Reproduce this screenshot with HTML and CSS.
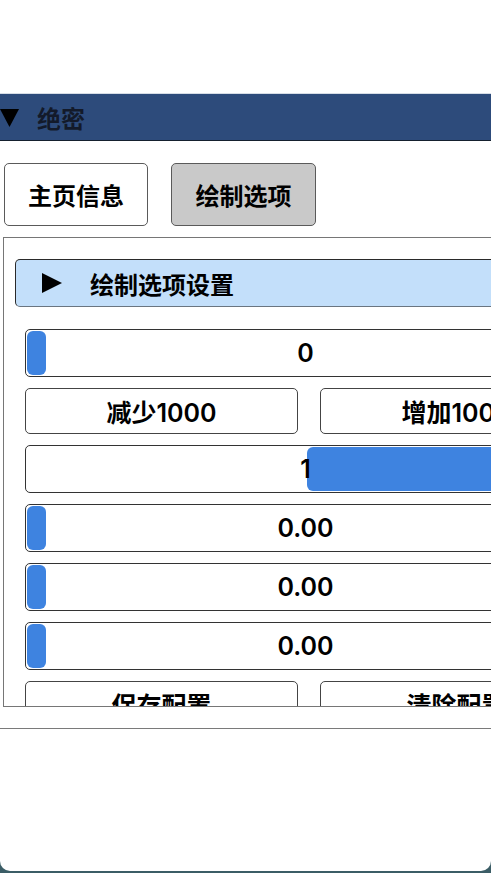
FILE: index.html
```html
<!DOCTYPE html>
<html lang="zh-CN">
<head>
<meta charset="utf-8">
<title>绝密</title>
<link rel="stylesheet" href="styles.css">
</head>
<body>
<div class="screen">
  <div class="top-space"></div>
  <div class="window">
    <div class="titlebar">
      <svg class="tri-down" width="19" height="18" viewBox="0 0 19 18"><polygon points="0,0 19,0 9.5,18" fill="#000"/></svg>
      <span class="title-text">绝密</span>
    </div>
    <div class="win-body">
      <div class="tabs">
        <div class="tab">主页信息</div>
        <div class="tab active">绘制选项</div>
      </div>
      <div class="child">
        <div class="header">
          <svg class="tri-right" width="20" height="20" viewBox="0 0 20 20"><polygon points="0,0 20,10 0,20" fill="#000"/></svg>
          <span class="header-text">绘制选项设置</span>
        </div>
        <div class="items">
          <div class="slider"><div class="grab"></div><span class="val">0</span></div>
          <div class="btn-row">
            <div class="btn">减少1000</div>
            <div class="btn">增加1000</div>
          </div>
          <div class="slider"><div class="grab wide"></div><span class="val">1</span></div>
          <div class="slider"><div class="grab"></div><span class="val">0.00</span></div>
          <div class="slider"><div class="grab"></div><span class="val">0.00</span></div>
          <div class="slider"><div class="grab"></div><span class="val">0.00</span></div>
          <div class="btn-row">
            <div class="btn">保存配置</div>
            <div class="btn">清除配置</div>
          </div>
        </div>
      </div>
    </div>
  </div>
  <div class="rest"></div>
</div>
</body>
</html>
```

FILE: styles.css
```css
html, body {
  margin: 0;
  padding: 0;
  background: #3b5d66;
}
body {
  width: 491px;
  height: 873px;
  overflow: hidden;
  font-family: "Inter", "Noto Sans CJK SC", sans-serif;
  font-weight: 600;
  font-size: 24px;
  color: #000;
}
.screen {
  width: 491px;
  height: 871px;
  background: #ffffff;
  border-radius: 0 0 10px 10px;
  display: flex;
  flex-direction: column;
  overflow: hidden;
}
.top-space {
  height: 93px;
  flex: none;
}
.window {
  flex: none;
  width: 700px;
  border-top: 1px solid #d6dde6;
  border-bottom: 1px solid #7a7a7a;
}
.titlebar {
  height: 46px;
  background: #2d4b7b;
  border-bottom: 1px solid #15202e;
  display: flex;
  align-items: center;
}
.tri-down {
  margin-top: 1px;
}
.title-text {
  margin-left: 18px;
  color: #131a2a;
  font-weight: 700;
  font-family: "Noto Sans CJK SC", sans-serif;
  font-size: 24px;
}
.win-body {
  padding: 22px 0 21px 0;
}
.tabs {
  display: flex;
  gap: 23px;
  padding-left: 4px;
  margin-bottom: 11px;
}
.tab {
  width: 142px;
  height: 61px;
  border: 1px solid #5a5a5a;
  border-radius: 5px;
  background: #ffffff;
  display: flex;
  align-items: center;
  justify-content: center;
  font-family: "Noto Sans CJK SC", sans-serif;
  font-weight: 700;
  font-size: 24px;
}
.tab.active {
  background: #c9c9c9;
  width: 143px;
}
.child {
  margin-left: 3px;
  width: 650px;
  height: 470px;
  box-sizing: border-box;
  border: 1px solid #767676;
  overflow: hidden;
  padding: 21px 21px 0 21px;
}
.header {
  margin: 0 -10px 22px -10px;
  height: 48px;
  box-sizing: border-box;
  background: #c3dffa;
  border: 1px solid #2a2a2a;
  border-bottom-color: #6a7580;
  border-radius: 5px;
  display: flex;
  align-items: center;
}
.tri-right {
  margin-left: 26px;
}
.header-text {
  margin-left: 28px;
  font-family: "Noto Sans CJK SC", sans-serif;
  font-weight: 700;
  font-size: 24px;
}
.items {
  display: flex;
  flex-direction: column;
  gap: 11px;
}
.slider {
  position: relative;
  width: 561px;
  height: 48px;
  box-sizing: border-box;
  border: 1px solid #333;
  border-radius: 5px;
  background: #fff;
  display: flex;
  align-items: center;
  justify-content: center;
}
.grab {
  position: absolute;
  left: 1px;
  top: 1px;
  bottom: 1px;
  width: 19px;
  background: #3e83e0;
  border-radius: 6px;
}
.grab.wide {
  left: 281px;
  width: 270px;
}
.val {
  position: relative;
  font-weight: 600;
  font-size: 25px;
}
.btn-row {
  display: grid;
  grid-template-columns: 273px 273px;
  gap: 22px;
}
.btn {
  height: 46px;
  box-sizing: border-box;
  border: 1px solid #444;
  border-radius: 5px;
  background: #fff;
  display: flex;
  align-items: center;
  justify-content: center;
  font-size: 25px;
  font-weight: 600;
}
.rest {
  flex: 1;
}
```
